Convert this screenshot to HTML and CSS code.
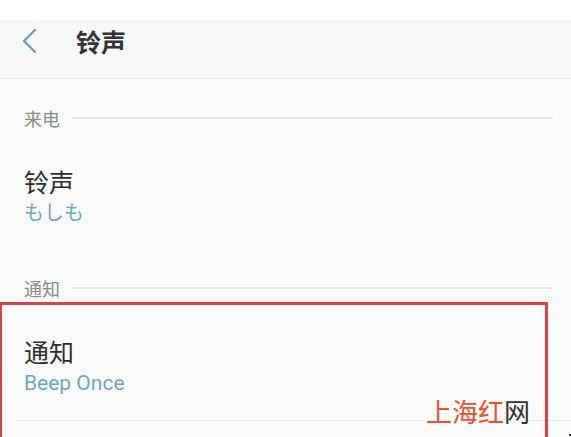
FILE: index.html
```html
<!DOCTYPE html>
<html lang="zh-CN">

<head>
    <meta charset="utf-8">
    <meta name="viewport" content="width=device-width, initial-scale=1.0">
    <title>铃声</title>
    <link rel="stylesheet" href="styles.css">
</head>

<body>
    <div class="statusbar"></div>

    <div class="header">
        <svg class="back" width="18" height="26" viewBox="0 0 18 26">
            <path d="M15 2 L4 13 L15 24" fill="none" stroke="#6f9ea3" stroke-width="2.4" stroke-linecap="round" stroke-linejoin="round"/>
        </svg>
        <h1 class="title">铃声</h1>
    </div>

    <div class="section">
        <span class="sectionName">来电</span>
        <span class="sectionLine"></span>
    </div>
    <div class="item">
        <div class="itemTitle">铃声</div>
        <div class="itemValue">もしも</div>
    </div>

    <div class="section second">
        <span class="sectionName">通知</span>
        <span class="sectionLine"></span>
    </div>
    <div class="item last">
        <div class="itemTitle">通知</div>
        <div class="itemValue">Beep Once</div>
    </div>

    <!-- highlight box drawn over the screenshot -->
    <div class="highlight"></div>
    <div class="watermark"><span class="red">上海红</span>网</div>
    <div class="dot"></div>
</body>

</html>
```

FILE: styles.css
```css
html {
    width: 100%;
    height: 100%;
    font-family: 'Noto Sans CJK SC', 'Noto Sans', sans-serif;
}

body {
    margin: 0;
    background: #fafafa;
    color: #333;
    width: 571px;
    height: 437px;
    overflow: hidden;
    position: relative;
}

.statusbar {
    height: 20px;
    background: #fff;
}

.header {
    height: 58px;
    background: #f7f7f7;
    border-bottom: 1px solid #e4e4e4;
    display: flex;
    align-items: flex-start;
    padding-left: 20px;
}

.back {
    margin-top: 8px;
}

.title {
    margin: 8px 0 0 38px;
    font-size: 25px;
    font-weight: bold;
    color: #333;
    line-height: 26px;
}

.section {
    display: flex;
    align-items: center;
    padding: 0 18px 0 24px;
    margin-top: 29px;
    height: 20px;
}

.section.second {
    margin-top: 52px;
}

.sectionName {
    font-size: 18px;
    color: #8a8a8a;
    line-height: 20px;
}

.sectionLine {
    flex: 1;
    height: 2px;
    background: #e6e6e6;
    margin-left: 12px;
}

.item {
    padding: 0 24px;
    margin-top: 38px;
}

.itemTitle {
    font-size: 25px;
    line-height: 30px;
    color: #2e2e2e;
}

.itemValue {
    font-size: 20px;
    line-height: 26px;
    color: #6eaab5;
    margin-top: 4px;
    font-family: 'Roboto', 'Noto Sans CJK JP', sans-serif;
}

.item.last {
    margin-top: 38px;
    padding-bottom: 24px;
    border-bottom: 1px solid #e6e6e6;
    margin-left: 15px;
    padding-left: 9px;
}

.item.last .itemValue {
    font-size: 21px;
}

.highlight {
    position: absolute;
    left: -1px;
    top: 302px;
    width: 543px;
    height: 132px;
    border: 3px solid #d8434b;
    border-bottom: none;
}

.watermark {
    position: absolute;
    left: 426px;
    top: 396px;
    font-size: 26px;
    line-height: 30px;
    color: #333;
    background: #fafafa;
}

.red {
    color: #e8512b;
}

.dot {
    position: absolute;
    left: 569px;
    top: 434px;
    width: 2px;
    height: 2px;
    background: #333;
}
```
